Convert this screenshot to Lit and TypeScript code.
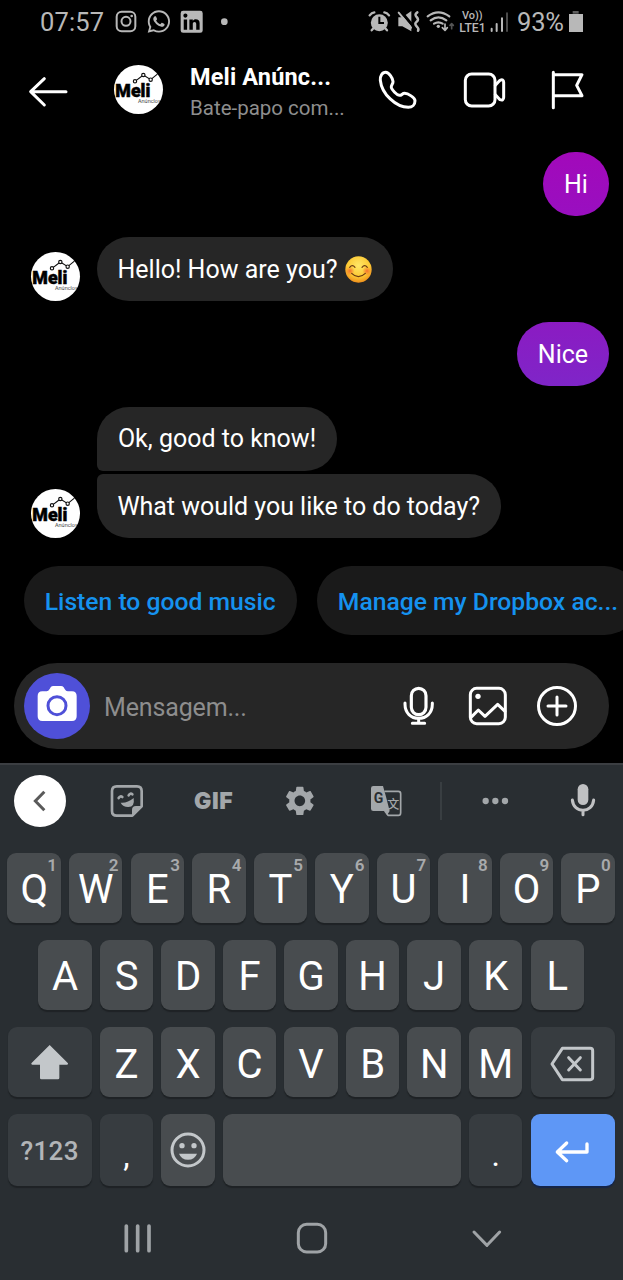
import { LitElement, html, svg, css } from "lit";
import { customElement, property } from "lit/decorators.js";

// Icons are drawn on a grid three times finer than the page.
const icon = (x: number, y: number, w: number, h: number, body: unknown, cls = "") => html`
  <svg class="ic ${cls}" viewBox="${x} ${y} ${w} ${h}" width="${w / 3}" height="${h / 3}" aria-hidden="true">${body}</svg>`;

const GEAR =
  "M19.14 12.94c.04-.3.06-.61.06-.94 0-.32-.02-.64-.07-.94l2.03-1.58c.18-.14.23-.41.12-.61l-1.92-3.32c-.12-.22-.37-.29-.59-.22l-2.39.96c-.5-.38-1.03-.7-1.62-.94l-.36-2.54c-.04-.24-.24-.41-.48-.41h-3.84c-.24 0-.43.17-.47.41l-.36 2.54c-.59.24-1.13.57-1.62.94l-2.39-.96c-.22-.08-.47 0-.59.22L2.74 8.87c-.12.21-.08.47.12.61l2.03 1.58c-.05.3-.09.63-.09.94s.02.64.07.94l-2.03 1.58c-.18.14-.23.41-.12.61l1.92 3.32c.12.22.37.29.59.22l2.39-.96c.5.38 1.03.7 1.62.94l.36 2.54c.05.24.24.41.48.41h3.84c.24 0 .44-.17.47-.41l.36-2.54c.59-.24 1.13-.56 1.62-.94l2.39.96c.22.08.47 0 .59-.22l1.92-3.32c.12-.22.07-.47-.12-.61l-2.01-1.58zM12 15.6c-1.98 0-3.6-1.62-3.6-3.6s1.62-3.6 3.6-3.6 3.6 1.62 3.6 3.6-1.62 3.6-3.6 3.6z";
const WHATSAPP =
  "M12.04 2C6.58 2 2.13 6.45 2.13 11.91C2.13 13.66 2.59 15.36 3.45 16.86L2.05 22L7.3 20.62C8.75 21.41 10.38 21.83 12.04 21.83C17.5 21.83 21.95 17.38 21.95 11.92C21.95 9.27 20.92 6.78 19.05 4.91C17.18 3.03 14.69 2 12.04 2M12.05 3.67C14.25 3.67 16.31 4.53 17.87 6.09C19.42 7.65 20.28 9.72 20.28 11.92C20.28 16.46 16.58 20.15 12.04 20.15C10.56 20.15 9.11 19.76 7.85 19L7.55 18.83L4.43 19.65L5.26 16.61L5.06 16.29C4.24 15 3.8 13.47 3.8 11.91C3.81 7.37 7.5 3.67 12.05 3.67M8.53 7.33C8.37 7.33 8.1 7.39 7.87 7.64C7.65 7.89 7 8.5 7 9.71C7 10.93 7.89 12.1 8 12.27C8.14 12.44 9.76 14.94 12.25 16C12.84 16.27 13.3 16.42 13.66 16.53C14.25 16.72 14.79 16.69 15.22 16.63C15.7 16.56 16.68 16.03 16.89 15.45C17.1 14.87 17.1 14.38 17.04 14.27C16.97 14.17 16.81 14.11 16.56 14C16.31 13.86 15.09 13.26 14.87 13.18C14.64 13.1 14.5 13.06 14.31 13.3C14.15 13.55 13.67 14.11 13.53 14.27C13.38 14.44 13.24 14.46 13 14.34C12.74 14.21 11.94 13.95 11 13.11C10.26 12.45 9.77 11.64 9.62 11.39C9.5 11.15 9.61 11 9.73 10.89C9.84 10.78 10 10.6 10.1 10.45C10.23 10.31 10.27 10.2 10.35 10.04C10.43 9.87 10.39 9.73 10.33 9.61C10.27 9.5 9.77 8.26 9.56 7.77C9.36 7.29 9.16 7.35 9 7.33H8.53Z";
const LINKEDIN =
  "M19 3A2 2 0 0 1 21 5V19A2 2 0 0 1 19 21H5A2 2 0 0 1 3 19V5A2 2 0 0 1 5 3H19M18.5 18.5V13.2A3.26 3.26 0 0 0 15.24 9.94C14.39 9.94 13.4 10.46 12.92 11.24V10.13H10.13V18.5H12.92V13.57C12.92 12.8 13.54 12.17 14.31 12.17A1.4 1.4 0 0 1 15.71 13.57V18.5H18.5M6.88 8.56A1.68 1.68 0 0 0 8.56 6.88C8.56 5.95 7.81 5.19 6.88 5.19A1.69 1.69 0 0 0 5.19 6.88C5.19 7.81 5.95 8.56 6.88 8.56M8.27 18.5V10.13H5.5V18.5H8.27Z";

const iconStyles = css`
  .ic { display: block; flex: none; overflow: visible; }
  .line { fill: none; stroke: currentColor; stroke-linecap: round; stroke-linejoin: round; }
  .solid { fill: currentColor; stroke: none; }
`;

@customElement("brand-avatar")
export class BrandAvatar extends LitElement {
  static styles = css`
    :host { display: block; flex: none; width: 49px; height: 49px; border-radius: 50%; overflow: hidden; background: #fff; }
    svg { display: block; }
    .name { font: 900 53px Roboto, sans-serif; stroke: #000; stroke-width: 1.5; }
    .sub { font: 400 13px Inter, sans-serif; fill: #333; }
    .trend { fill: none; stroke: #111; stroke-width: 3.4; }
    .node { fill: #fff; stroke: #111; stroke-width: 3.4; }
  `;
  render() {
    return html`<svg viewBox="342 196 147 147" width="49" height="49">
      <path class="trend" d="M405 245L430 226L452 240L474 222" />
      <circle class="node" cx="405" cy="245" r="5" /><circle class="node" cx="430" cy="226" r="5" /><circle class="node" cx="452" cy="240" r="5" />
      <text class="name" x="346" y="293" textLength="105" lengthAdjust="spacingAndGlyphs">Meli</text>
      <text class="sub" x="414" y="309" textLength="68" lengthAdjust="spacingAndGlyphs">Anúncios</text>
    </svg>`;
  }
}

@customElement("status-bar")
export class StatusBar extends LitElement {
  static styles = [iconStyles, css`
    :host { display: flex; height: 44px; color: #b8b8b8; }
    .t { font: 400 25.5px/44px Roboto, sans-serif; white-space: nowrap; }
    .time { margin-left: 40px; width: 75px; letter-spacing: 0.15px; }
    .pct { margin-left: 7px; width: 51px; letter-spacing: -0.2px; }
    .g6 { margin-left: 6px; } .g4 { margin-left: 4px; } .g9 { margin-left: 9px; }
    .g10 { margin-left: 10px; } .g16 { margin-left: 16px; } .push { margin-left: 139px; }
    .vo { font: 500 32px Roboto, sans-serif; fill: currentColor; }
    .lte { font: 500 37px Roboto, sans-serif; fill: currentColor; }
    .cut { stroke: #000; fill: none; }
  `];
  render() {
    return html`
      <span class="t time">07:57</span>
      ${icon(345, 0, 66, 132, svg`
        <rect class="line" stroke-width="6" x="350" y="35" width="56" height="59" rx="15"/>
        <circle class="line" stroke-width="6" cx="378" cy="64" r="13.5"/><circle class="solid" cx="395" cy="48" r="4"/>`)}
      ${icon(441, 0, 72, 132, svg`<path class="solid" transform="translate(436.3 24.3) scale(3.36)" d=${WHATSAPP} />`, "g10")}
      ${icon(540, 0, 72, 132, svg`<path class="solid" fill-rule="evenodd" transform="translate(531 21.5) scale(3.67)" d=${LINKEDIN} />`, "g9")}
      ${icon(660, 0, 27, 132, svg`<circle class="solid" cx="673" cy="65" r="10"/>`, "g16")}
      ${icon(171, 0, 69, 132, svg`
        <circle class="solid" cx="205" cy="68" r="25.5"/>
        <path class="line" stroke-width="7" d="M176 46Q182 38 190 37M234 46Q228 38 220 37M188 84L182 91M222 84L228 91"/>
        <path class="cut" stroke-width="6" d="M205 50V69H219"/>`, "push")}
      ${icon(258, 0, 69, 132, svg`
        <path class="solid" d="M262 52H274L301 33V94L274 79H262Z"/>
        <path class="cut" stroke-width="9" d="M266 31L308 80"/>
        <path class="line" stroke-width="6" d="M263 38L300 83"/>
        <path class="line" stroke-width="7.5" d="M319 37Q309 43 317 51T317 65T317 79T321 92"/>`, "g6")}
      ${icon(345, 0, 87, 132, svg`
        <path class="line" stroke-width="6.5" d="M350 49Q382 25 415 49M359 61Q382 43 406 61M369 71Q382 63 395 71"/>
        <circle class="solid" cx="382" cy="79" r="5"/>
        <path class="line" stroke-width="5" d="M402 72V90M394 83L402 91L409 83"/>
        <path class="line" opacity=".45" stroke-width="5" d="M422 72V86M417 76L422 71L427 76"/>`, "g6")}
      ${icon(444, 0, 81, 132, svg`
        <text class="vo" x="453" y="58" textLength="62" lengthAdjust="spacingAndGlyphs">Vo))</text>
        <text class="lte" x="445" y="96" textLength="79" lengthAdjust="spacingAndGlyphs">LTE1</text>`, "g4")}
      ${icon(537, 0, 60, 132, svg`
        <path class="line" stroke-width="6" d="M542 86V93M557 72V93M573 55V93"/>
        <path class="line" opacity=".4" stroke-width="6" d="M588 40V93"/>`, "g4")}
      <span class="t pct">93%</span>
      ${icon(771, 0, 48, 132, svg`
        <path class="solid" opacity=".5" d="M785 33h18v8h-18z"/><path class="solid" d="M774 42h42v54h-42z"/>`)}
    `;
  }
}

@customElement("chat-header")
export class ChatHeader extends LitElement {
  static styles = [iconStyles, css`
    :host { display: flex; height: 92px; color: #fff; font-family: Roboto, sans-serif; }
    .back { margin-left: 29px; }
    brand-avatar { margin: 21px 27px 0 45px; }
    .who { width: 160px; padding-top: 18px; white-space: nowrap; }
    .title { font-size: 23.5px; font-weight: 700; line-height: 30px; letter-spacing: 0.15px; }
    .sub { font-size: 20.5px; line-height: 32px; color: #8e8e8e; }
    .call { margin-left: 28px; } .video { margin-left: 45px; } .flag { margin-left: 45px; }
  `];
  render() {
    return html`
      ${icon(87, 132, 120, 276, svg`<path class="line" stroke-width="9" d="M198 275H93M133 236L92 275L133 315"/>`, "back")}
      <brand-avatar></brand-avatar>
      <div class="who"><div class="title">Meli Anúnc...</div><div class="sub">Bate-papo com...</div></div>
      ${icon(201, 132, 120, 276, svg`<path class="line" stroke-width="9" d="M224 217C213 217 207 228 208 241C212 282 255 322 292 322C304 322 312 314 312 302C312 293 291 280 281 280C273 280 272 287 265 286C257 285 243 270 241 263C239 256 247 252 246 244C245 235 234 217 224 217Z"/>`, "call")}
      ${icon(456, 132, 129, 276, svg`
        <rect class="line" stroke-width="9" x="463" y="222" width="89" height="96" rx="19"/>
        <path class="line" stroke-width="9" d="M553 256L567 241Q578 236 578 247V292Q578 303 567 299L553 284"/>`, "video")}
      ${icon(720, 132, 99, 276, svg`<path class="line" stroke-width="9" d="M727 217V323M727 224H813L797 256L813 287H727"/>`, "flag")}
    `;
  }
}

@customElement("chat-thread")
export class ChatThread extends LitElement {
  static styles = css`
    :host { display: block; height: 526.5px; box-sizing: border-box; padding-top: 16px; font-family: Roboto, sans-serif; overflow: hidden; }
    .row { display: flex; align-items: flex-end; margin-bottom: 21px; }
    .out { justify-content: flex-end; padding-right: 14px; }
    .in { padding-left: 30.5px; gap: 17.5px; }
    .stack { display: flex; flex-direction: column; align-items: flex-start; gap: 3.5px; }
    .b { display: flex; align-items: center; justify-content: center; height: 64px; box-sizing: border-box; border-radius: 32px; background: #262626; color: #fff; font-size: 25px; white-space: nowrap; }
    .hi { width: 66px; background: linear-gradient(#a209ba, #990fc0); }
    .nice { width: 92px; background: linear-gradient(#8b1bc2, #7f25c8); }
    .hello { width: 296px; gap: 7px; padding-right: 1px; }
    .ok { width: 240px; padding-bottom: 1px; border-bottom-left-radius: 6px; }
    .what { width: 403.5px; border-top-left-radius: 6px; letter-spacing: -0.02px; }
    .chips { display: flex; gap: 20.5px; margin: 28px 0 0 24px; }
    .chip { flex: none; display: flex; align-items: center; justify-content: center; height: 69px; padding-top: 1px; box-sizing: border-box; border-radius: 34.5px; background: #1a1a1a; color: #1592ef; font-size: 24.7px; font-weight: 500; white-space: nowrap; }
    .c1 { width: 272.5px; } .c2 { width: 322px; }
    .last { margin: -0.5px 0 0; }
    .smile { fill: none; stroke: #6b3a12; stroke-width: 3.5; stroke-linecap: round; }
  `;
  render() {
    return html`
      <div class="row out"><div class="b hi">Hi</div></div>
      <div class="row in"><brand-avatar></brand-avatar><div class="b hello"><span>Hello! How are you?</span>
        <svg viewBox="1035 91 81 81" width="27" height="27" role="img" aria-label="😊">
          <defs>
            <radialGradient id="face" cx=".5" cy=".35" r=".65"><stop offset="0" stop-color="#ffe768"/><stop offset=".65" stop-color="#fcc934"/><stop offset="1" stop-color="#ef8f1c"/></radialGradient>
            <radialGradient id="blush"><stop offset="0" stop-color="#f4602c" stop-opacity=".85"/><stop offset="1" stop-color="#f4702c" stop-opacity="0"/></radialGradient>
          </defs>
          <circle cx="1075.500" cy="131.500" r="39.500" fill="url(#face)"/>
          <circle cx="1050" cy="136" r="14" fill="url(#blush)"/><circle cx="1101" cy="136" r="14" fill="url(#blush)"/>
          <path class="smile" d="M1049 125Q1057 115 1065 125M1086 125Q1094 115 1102 125M1055 143Q1075 163 1096 143"/>
        </svg></div></div>
      <div class="row out"><div class="b nice">Nice</div></div>
      <div class="row in last"><brand-avatar></brand-avatar>
        <div class="stack"><div class="b ok">Ok, good to know!</div><div class="b what">What would you like to do today?</div></div></div>
      <div class="chips"><div class="chip c1">Listen to good music</div><div class="chip c2">Manage my Dropbox ac...</div></div>
    `;
  }
}

@customElement("message-composer")
export class MessageComposer extends LitElement {
  static styles = [iconStyles, css`
    :host { display: block; height: 100.5px; color: #fff; }
    .bar { display: flex; width: 595px; height: 86px; margin-left: 14px; border-radius: 43px; background: #262626; }
    .cam { width: 66px; height: 66px; margin: 10px 0 0 10px; }
    .hint { width: 284px; margin-left: 14px; font: 400 25px/90px Roboto, sans-serif; color: #8d8d8d; letter-spacing: -0.15px; }
    .mic { margin-left: 15px; } .pic { margin-left: 32px; } .add { margin-left: 28px; }
  `];
  render() {
    return html`<div class="bar">
      ${icon(72, 69, 198, 198, svg`
        <circle cx="171" cy="168" r="99" fill="#4f50d8"/>
        <path class="solid" d="M127 124H140Q145 124 149 117L152 112Q155 108 160 108H183Q188 108 191 112L194 117Q198 124 203 124H216Q230 124 230 138V199Q230 213 216 213H127Q113 213 113 199V138Q113 124 127 124Z"/>
        <circle cx="171" cy="167" r="27" fill="none" stroke="#4f50d8" stroke-width="9"/>`, "cam")}
      <span class="hint">Mensagem...</span>
      ${icon(276, 39, 96, 258, svg`
        <rect class="line" stroke-width="9.500" x="301" y="115" width="44" height="79" rx="22"/>
        <path class="line" stroke-width="9" d="M282 159V163C282 189 300 205 323 205S364 189 364 163V159M323 205V218M304 220H341"/>`, "mic")}
      ${icon(468, 39, 120, 258, svg`
        <rect class="line" stroke-width="9" x="478" y="115" width="105" height="106" rx="19"/>
        <circle class="solid" cx="501" cy="139" r="8"/>
        <path class="line" stroke-width="9" d="M480 202L502 180L522 199L560 163L582 184"/>`, "pic")}
      ${icon(672, 39, 129, 258, svg`
        <circle class="line" stroke-width="9" cx="738" cy="168" r="55.500"/>
        <path class="line" stroke-width="9" d="M711 168h54M738 141v54"/>`, "add")}
    </div>`;
  }
}

@customElement("key-cap")
export class KeyCap extends LitElement {
  @property() label = "";
  @property() hint = "";
  static styles = css`
    :host { display: flex; justify-content: center; position: relative; flex: none; box-sizing: border-box; width: 53.45px; height: 70px; border-radius: 9px; background: #484c4f; box-shadow: 0 1.5px 1px #1e2225; color: #fff; font: 400 40px/74px Roboto, sans-serif; }
    .hint { position: absolute; top: 2px; right: 4px; font-size: 17px; line-height: 20px; font-weight: 600; color: #a8aaac; }
  `;
  render() {
    return html`<slot>${this.label}</slot>${this.hint ? html`<span class="hint">${this.hint}</span>` : null}`;
  }
}

@customElement("soft-keyboard")
export class SoftKeyboard extends LitElement {
  static styles = [iconStyles, css`
    :host { display: block; box-sizing: border-box; height: 517px; border-top: 2px solid #3b3e42; background: #292e32; color: #a3a7aa; font-family: Roboto, sans-serif; }
    .tools { display: flex; height: 88px; }
    .collapse { margin-left: 14px; } .sticker { margin-left: 43px; }
    .gif { width: 42px; margin-left: 50px; font: 900 23px/72px Inter, sans-serif; letter-spacing: 0.6px; }
    .gear { margin-left: 48px; } .trans { margin-left: 54px; } .sep { margin-left: 38px; }
    .more { margin-left: 38px; } .voice { margin-left: 59px; color: #c0c1c3; }
    .chev { fill: none; stroke: #5a5a5a; stroke-width: 9; }
    .gt { font: 700 42px Roboto, sans-serif; fill: #292e32; }
    .zh { font: 500 36px "Noto Sans CJK SC", sans-serif; fill: currentColor; }
    .keys { display: flex; flex-direction: column; gap: 17px; }
    .row { display: flex; justify-content: center; gap: 8.1px; margin-right: 0.8px; }
    .low { line-height: 75px; }
    .wide { width: 84px; }
    .fn { background: #373c40; color: #c3c7ca; }
    .tall { height: 72px; }
    .num { font-size: 26px; font-weight: 500; letter-spacing: 0.3px; line-height: 75px; color: #b2b5b8; }
    .punct { color: #fff; line-height: 83px; font-size: 32px; }
    .space { width: 238.1px; }
    .enter { background: #5e97f6; color: #fff; box-shadow: 0 1.5px 1px #14254a; }
    .nav { display: flex; height: 93px; padding-top: 1px; color: #9fa3a6; }
    .recent { margin-left: 122px; } .home { margin-left: 142px; } .hide { margin-left: 143px; }
  `];
  private keys(row: string, hints = "", cls = "") {
    return [...row].map((k, i) => html`<key-cap class=${cls} label=${k} hint=${hints[i] ?? ""}></key-cap>`);
  }
  render() {
    return html`
      <div class="tools">
        ${icon(42, 345, 156, 225, svg`<circle cx="120" cy="453" r="78" fill="#fff"/><path class="chev" d="M133 425L106 453L133 481"/>`, "collapse")}
        ${icon(327, 345, 105, 225, svg`
          <path class="line" stroke-width="8" d="M397 497H350Q336 497 336 483V423Q336 409 350 409H411Q425 409 425 423V469Z"/>
          <path class="solid" d="M396 498V480Q396 468 408 468H426Z"/>
          <path class="solid" d="M362 458Q382 460 401 444Q405 472 384 471Q369 471 362 458Z"/>
          <path class="line" stroke-width="8" d="M356 444Q361 436 367 441M386 436Q391 428 397 433"/>`, "sticker")}
        <span class="gif">GIF</span>
        ${icon(852, 345, 96, 225, svg`<path class="solid" transform="translate(846.500 399.500) scale(4.42)" d=${GEAR} />`, "gear")}
        ${icon(177, 345, 96, 225, svg`
          <path class="line" stroke-width="5" d="M222 424H262Q269 424 269 431V488Q269 496 262 496H231L222 484"/>
          <path class="solid" d="M187 408H216L225 440L236 483L228 496L223 483H187Q180 483 180 476V415Q180 408 187 408Z"/>
          <text class="gt" x="188" y="460">G</text>
          <text class="zh" x="229" y="477">文</text>`, "trans")}
        ${icon(387, 345, 6, 225, svg`<path d="M388 396h4v114h-4z" fill="#42474b"/>`, "sep")}
        ${icon(507, 345, 90, 225, svg`<circle class="solid" cx="524" cy="453" r="9.500"/><circle class="solid" cx="553" cy="453" r="9.500"/><circle class="solid" cx="582" cy="453" r="9.500"/>`, "more")}
        ${icon(774, 345, 84, 225, svg`
          <rect class="solid" x="800" y="402" width="32" height="63" rx="16"/>
          <path class="line" stroke-width="9" d="M784 450C786 470 800 481 816 481S846 470 848 450M816 483V494"/>`, "voice")}
      </div>
      <div class="keys">
        <div class="row">${this.keys("QWERTYUIOP", "1234567890")}</div>
        <div class="row">${this.keys("ASDFGHJKL")}</div>
        <div class="row">
          <key-cap class="wide fn">${icon(24, 21, 252, 210, svg`<path class="solid" d="M149 75L204 130Q205 134 201 134H178V174Q178 178 174 178H124Q120 178 120 174V134H97Q93 134 94 130Z"/>`)}</key-cap>
          ${this.keys("ZXCVBNM", "", "low")}
          <key-cap class="wide fn">${icon(660, 21, 252, 210, svg`<path class="line" stroke-width="9" d="M754 85H838Q845 85 845 92V172Q845 179 838 179H754L723 132ZM773 113L808 150M808 113L773 150"/>`)}</key-cap>
        </div>
        <div class="row">
          <key-cap class="wide fn tall num">?123</key-cap>
          <key-cap class="fn tall punct">,</key-cap>
          <key-cap class="tall">${icon(484, 283, 159, 216, svg`
            <circle cx="562" cy="391" r="48" fill="none" stroke="#c3c7ca" stroke-width="9"/>
            <circle cx="544" cy="378" r="8" fill="#c3c7ca"/><circle cx="580" cy="378" r="8" fill="#c3c7ca"/>
            <path fill="#c3c7ca" d="M535 402H589Q582 420 562 420T535 402Z"/>`)}</key-cap>
          <key-cap class="space tall"></key-cap>
          <key-cap class="fn tall punct">.</key-cap>
          <key-cap class="wide enter tall">${icon(659, 283, 252, 216, svg`<path class="line" stroke-width="10" d="M827 373V397H738M766 370L738 397L766 423"/>`)}</key-cap>
        </div>
      </div>
      <div class="nav">
        ${icon(366, 501, 96, 279, svg`<path class="line" stroke-width="11" d="M379 618V692M413 618V692M447 618V692"/>`, "recent")}
        ${icon(888, 501, 96, 279, svg`<rect class="line" stroke-width="9" x="895" y="613" width="82" height="83" rx="25"/>`, "home")}
        ${icon(480, 501, 96, 279, svg`<path class="line" stroke-width="9" d="M489 636L528 676L566 636"/>`, "hide")}
      </div>
    `;
  }
}

@customElement("app-root")
export class AppRoot extends LitElement {
  static styles = css`
    :host { display: block; width: 623px; height: 1280px; background: #000; overflow: hidden; }
  `;
  render() {
    return html`
      <status-bar></status-bar>
      <chat-header></chat-header>
      <chat-thread></chat-thread>
      <message-composer></message-composer>
      <soft-keyboard></soft-keyboard>
    `;
  }
}
